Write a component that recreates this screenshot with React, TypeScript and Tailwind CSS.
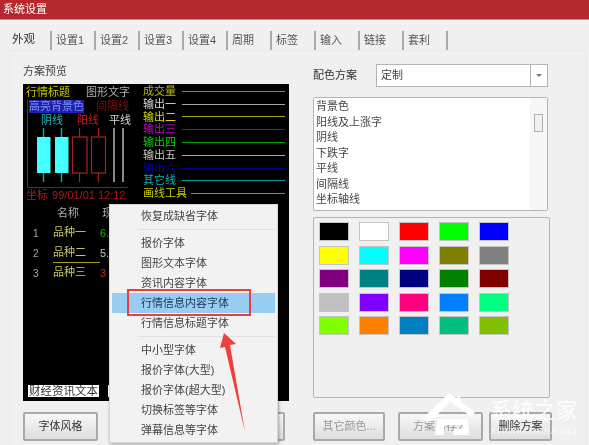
import React from 'react';

const cjk = { fontFamily: '"Liberation Sans", "Noto Sans CJK SC", sans-serif' };

const tabs = ['设置1', '设置2', '设置3', '设置4', '周期', '标签', '输入', '链接', '套利'];

const outputs = [
  { label: '成交量', text: 'text-[#b8b800]', line: 'bg-[#8f8f10]' },
  { label: '输出一', text: 'text-[#d8d8d8]', line: 'bg-[#a8a8a8]' },
  { label: '输出二', text: 'text-[#d8d800]', line: 'bg-[#a8a810]' },
  { label: '输出三', text: 'text-[#c000c0]', line: 'bg-[#900090]' },
  { label: '输出四', text: 'text-[#00d000]', line: 'bg-[#00a000]' },
  { label: '输出五', text: 'text-[#c8c8c8]', line: 'bg-[#a8a8a8]' },
  { label: '输出六', text: 'text-[#0000c0]', line: 'bg-[#000090]' },
  { label: '其它线', text: 'text-[#00b8b8]', line: 'bg-[#009898]' },
];

const rows = [
  { n: 1, name: '品种一', val: '6.', color: 'text-[#00c000]' },
  { n: 2, name: '品种二', val: '5.', color: 'text-[#c0c0c0]' },
  { n: 3, name: '品种三', val: '3', color: 'text-[#d02020]' },
];

const schemeItems = ['背景色', '阳线及上涨字', '阴线', '下跌字', '平线', '间隔线', '坐标轴线'];

const swatches = [
  'bg-[#000000]', 'bg-[#ffffff]', 'bg-[#ff0000]', 'bg-[#00ff00]', 'bg-[#0000ff]',
  'bg-[#ffff00]', 'bg-[#00ffff]', 'bg-[#ff00ff]', 'bg-[#808000]', 'bg-[#808080]',
  'bg-[#800080]', 'bg-[#008080]', 'bg-[#000080]', 'bg-[#008000]', 'bg-[#800000]',
  'bg-[#c0c0c0]', 'bg-[#8000ff]', 'bg-[#ff0080]', 'bg-[#0080ff]', 'bg-[#00ff80]',
  'bg-[#80ff00]', 'bg-[#ff8000]', 'bg-[#0080c0]', 'bg-[#00c080]', 'bg-[#80c000]',
];

const menuTop = ['报价字体', '图形文本字体', '资讯内容字体', '行情信息内容字体', '行情信息标题字体'];
const menuBottom = ['中小型字体', '报价字体(大型)', '报价字体(超大型)', '切换标签等字体', '弹幕信息等字体'];

const Btn = ({ className, children, muted }: { className: string; children?: React.ReactNode; muted?: boolean }) => (
  <div
    className={`h-[29px] flex items-center justify-center border-2 border-[#a9a9a9] rounded-[2px] bg-gradient-to-b from-[#f8f8f8] to-[#dedede] ${muted ? 'text-[#999]' : 'text-[#333]'} ${className}`}
  >
    {children}
  </div>
);

const Candles = () => (
  <svg width="100" height="59" className="block">
    <g stroke="#1f9c9c" strokeWidth="1.5">
      <line x1="15.5" y1="0" x2="15.5" y2="54" />
      <line x1="33.5" y1="0" x2="33.5" y2="54" />
    </g>
    <rect x="9" y="9" width="13.5" height="36" fill="#44ffff" />
    <rect x="27" y="9" width="13.5" height="36" fill="#44ffff" />
    <g stroke="#a82020" strokeWidth="1.2" fill="#000">
      <line x1="51.5" y1="0" x2="51.5" y2="54" />
      <line x1="70.5" y1="0" x2="70.5" y2="54" />
      <rect x="44.5" y="9" width="14.5" height="36" />
      <rect x="63.5" y="9" width="14" height="36" />
    </g>
    <g stroke="#b8b8b8" strokeWidth="1.5">
      <line x1="86" y1="0" x2="86" y2="54" />
      <line x1="95" y1="0" x2="95" y2="54" />
    </g>
  </svg>
);

const Preview = () => (
  <div className="w-[266px] h-[317px] mt-[6px] bg-black flex flex-col text-[11px] leading-[13px] pb-[4px]">
    <div className="flex h-[118px]">
      <div className="w-[120px] pl-[3px] pt-[1px]">
        <div className="flex h-[14px] items-center whitespace-nowrap">
          <span className="text-[#c8c800] w-[60px]">行情标题</span>
          <span className="text-[#b0b0b0]">图形文字</span>
        </div>
        <div className="ml-[1px] mt-[1px] border-l border-b border-[#8c1c1c] h-[88px] w-[101px] flex flex-col whitespace-nowrap">
          <div className="flex h-[13px] ml-[1px] items-center">
            <span className="bg-[#2020a8] text-[#7c90ff] w-[55px] shrink-0 text-center h-[13px]">高亮背景色</span>
            <span className="text-[#801010] ml-[12px]">间隔线</span>
          </div>
          <div className="flex h-[15px] ml-[13px] items-center">
            <span className="text-[#20b8b8] w-[36px] shrink-0">阴线</span>
            <span className="text-[#c02020] w-[32px] shrink-0">阳线</span>
            <span className="text-[#d8d8d8]">平线</span>
          </div>
          <Candles />
        </div>
        <div className="text-[#b01818] mt-[1px] h-[14px] whitespace-nowrap">
          坐标 <span className="ml-[1px]">99/01/01 12:12</span>
        </div>
      </div>
      <div className="flex-1 pt-[1px] pr-[4px]">
        {outputs.map((o) => (
          <div key={o.label} className="flex items-center h-[12.8px]">
            <span className={`w-[39px] ${o.text}`}>{o.label}</span>
            <span className={`flex-1 h-[1px] ${o.line}`} />
          </div>
        ))}
        <div className="flex items-center h-[12.8px]">
          <span className="w-[48px] text-[#c8c800]">画线工具</span>
          <span className="flex-1 h-[1px] bg-[#8f8f10]" />
        </div>
      </div>
    </div>
    <div className="flex text-[#b0b0b0] pl-[34px] h-[20px] items-center mt-[1px]">
      <span className="w-[45px]">名称</span>
      <span>现</span>
    </div>
    <div className="flex flex-col flex-1">
      {rows.map((r) => (
        <div key={r.n} className="flex items-center h-[20px]">
          <span className="w-[30px] pl-[10px] text-[#a8a8a8] text-[10px]">{r.n}</span>
          <span
            className={`w-[47px] text-[#c8c860] h-[20px] leading-[18px] ${r.n === 2 ? 'border-b border-[#a8a020]' : ''}`}
          >
            {r.name}
          </span>
          <span className={r.color}>{r.val}</span>
        </div>
      ))}
    </div>
    <div className="flex pl-[5px] gap-[9px]">
      <span className="bg-white text-[#333] w-[71px] h-[12px] leading-[12px] text-center text-[11.5px]">财经资讯文本</span>
      <span className="bg-white w-[10px] h-[12px]" />
    </div>
  </div>
);

const MenuItem = ({ label, active }: { label: string; active?: boolean }) => (
  <div className={`h-[20px] leading-[20px] pl-[29px] text-[#444] text-[11px] ${active ? 'bg-[#99ccf3] text-[#23395a]' : ''}`}>
    {label}
  </div>
);

const Watermark = () => (
  <div className="absolute left-[423px] top-[393px] flex items-start pointer-events-none">
    <svg width="52" height="42" viewBox="0 0 52 42">
      <path
        d="M0 25 L26 0 L33 5 L37 2 L38 9 L52 19 L49 24 L27 9 L9 27 L4 30 Z M14 26 L45 26 L46 42 L30 42 L31 36 L40 36 L40 32 L21 32 L21 42 L12 42 Z"
        fill="#ffffff"
      />
    </svg>
    <div className="ml-[15px] pt-[6px] flex flex-col text-white/90 w-[92px]">
      <span className="text-[22px] leading-[24px] whitespace-nowrap">系统之家</span>
      <span
        style={{ fontFamily: '"Liberation Serif", serif' }}
        className="text-[9px] leading-[10px] mt-[3px] tracking-[0.4px] whitespace-nowrap text-white/80"
      >
        XITONGZHIJIA.NET
      </span>
    </div>
  </div>
);

export default function App() {
  return (
    <div style={cjk} className="relative w-[589px] h-[445px] overflow-hidden bg-[#f0f0f0] text-[11px] text-[#444] blur-[0.5px]">
      {/* Title bar */}
      <div className="h-[20px] bg-[#b5282d] border-b border-[#d88] text-white text-[11px] leading-[19px] pl-[3px]">系统设置</div>

      {/* Tabs */}
      <div className="flex h-[19px] mt-[11px]">
        <div className="w-[52px] pl-[12px] border-r-2 border-[#aaa] text-[#333] text-[11.5px]">外观</div>
        {tabs.map((t) => (
          <div key={t} className="w-[44px] pl-[4px] border-r-2 border-[#aaa] leading-[18px] text-[#555]">
            {t}
          </div>
        ))}
      </div>

      {/* Page */}
      <div className="flex ml-[9px] mr-[2px] h-[395px] border-l border-t border-r border-[#e9e9e9] pl-[13px]">
        <div className="w-[266px] pt-[13px]">
          <div className="h-[14px] leading-[14px] text-[#444]">方案预览</div>
          <Preview />
          <div className="flex mt-[11px]">
            <Btn className="w-[75px]">字体风格</Btn>
            <Btn className="w-[10px] ml-[177px]" />
          </div>
        </div>

        <div className="w-[240px] ml-[24px] pt-[13px]">
          <div className="flex items-center h-[23px]">
            <span className="w-[63px] text-[#333]">配色方案</span>
            <div className="w-[172px] h-[23px] border border-[#b4b4b4] bg-white flex items-center pl-[4px] relative">
              <span className="flex-1">定制</span>
              <span className="w-[17px] h-full border-l border-[#b4b4b4] flex items-center justify-center">
                <span className="w-0 h-0 border-x-[3px] border-x-transparent border-t-[3px] border-t-[#777]" />
              </span>
            </div>
          </div>

          <div className="w-[235px] h-[114px] mt-[10px] border border-[#b4b4b4] rounded-[2px] bg-white pl-[2px] flex">
            <div className="flex-1 leading-[15.5px] pt-[1px] text-[#444]">
              {schemeItems.map((s) => (
                <div key={s}>{s}</div>
              ))}
            </div>
            <div className="w-[17px] bg-[#f7f7f7] flex justify-center pt-[16px]">
              <span className="w-[9px] h-[18px] border border-[#b0b0b0] bg-[#f0f0f0]" />
            </div>
          </div>

          <div className="w-[237px] h-[181px] mt-[6px] border border-[#b4b4b4] rounded-[2px] pl-[5px] pt-[4px]">
            <div className="grid grid-cols-[repeat(5,30px)] gap-x-[10px] gap-y-[4.5px]">
              {swatches.map((c) => (
                <span key={c} className={`h-[19px] border border-[#c4c4c4] ${c}`} />
              ))}
            </div>
          </div>

          <div className="flex mt-[14px]">
            <Btn muted className="w-[72px]">其它颜色...</Btn>
            <Btn muted className="w-[85px] ml-[13px]">方案另存为</Btn>
            <Btn className="w-[63px] ml-[6px]">删除方案</Btn>
          </div>
        </div>
      </div>

      {/* Context menu */}
      <div className="absolute left-[109px] top-[204px] w-[169px] h-[239px] bg-[#f2f2f2] border border-[#d8d8d8] shadow-[1px_1px_3px_rgba(0,0,0,0.35)] pt-[1px] px-[2px]">
        <MenuItem label="恢复成缺省字体" />
        <div className="h-[1px] bg-[#e0e0e0] ml-[26px] my-[3px]" />
        {menuTop.map((m, i) => (
          <MenuItem key={m} label={m} active={i === 3} />
        ))}
        <div className="h-[1px] bg-[#e0e0e0] ml-[26px] my-[3px]" />
        {menuBottom.map((m) => (
          <MenuItem key={m} label={m} />
        ))}
      </div>

      {/* Annotation box */}
      <div className="absolute left-[127px] top-[289px] w-[124px] h-[27px] border-2 border-[#e8403c]" />
      <svg className="absolute left-[215px] top-[330px]" width="36" height="105" viewBox="215 330 36 105">
        <polygon points="224,333 236,344 230,345 245,432 225,347 220,348" fill="#f0403e" />
      </svg>

      <Watermark />
    </div>
  );
}
